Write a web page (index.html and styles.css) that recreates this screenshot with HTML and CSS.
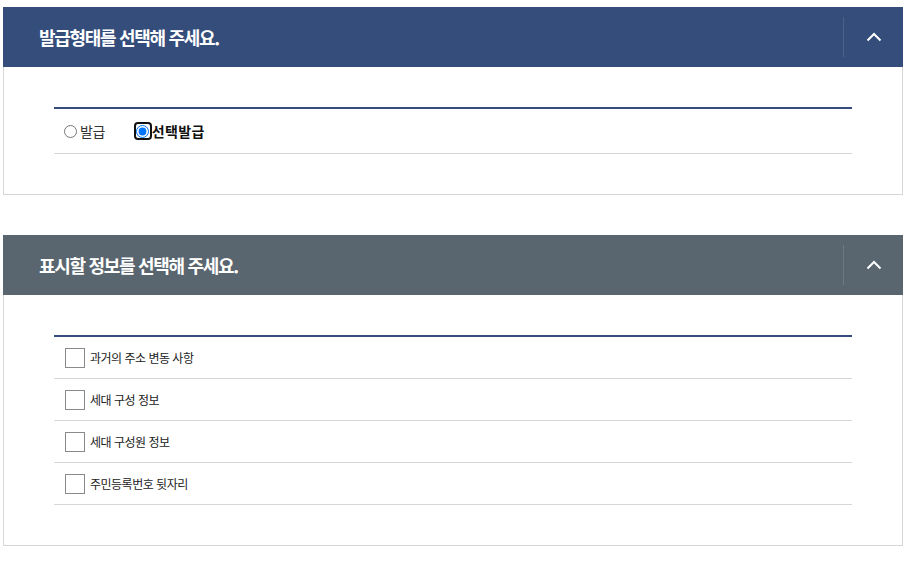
FILE: index.html
```html
<!DOCTYPE html>
<html lang="ko">
<head>
<meta charset="utf-8">
<title>발급형태 선택</title>
<link rel="stylesheet" href="styles.css">
</head>
<body>
<div class="page">
  <section class="panel">
    <div class="panel-head navy">
      <h2 class="panel-title">발급형태를 선택해 주세요.</h2>
      <button class="toggle" type="button" aria-label="접기">
        <svg width="16" height="10" viewBox="0 0 16 10"><path d="M1.5 8.5 L8 2 L14.5 8.5" fill="none" stroke="#fff" stroke-width="2"/></svg>
      </button>
    </div>
    <div class="panel-body">
      <div class="list">
        <div class="row radio-row">
          <label class="radio-opt"><input type="radio" name="type" class="radio">발급</label>
          <label class="radio-opt sel"><span class="focus-ring"><input type="radio" name="type" class="radio" checked></span>선택발급</label>
        </div>
      </div>
    </div>
  </section>

  <section class="panel">
    <div class="panel-head slate">
      <h2 class="panel-title">표시할 정보를 선택해 주세요.</h2>
      <button class="toggle" type="button" aria-label="접기">
        <svg width="16" height="10" viewBox="0 0 16 10"><path d="M1.5 8.5 L8 2 L14.5 8.5" fill="none" stroke="#fff" stroke-width="2"/></svg>
      </button>
    </div>
    <div class="panel-body">
      <div class="list">
        <label class="row check-row"><input type="checkbox" class="box"><span>과거의 주소 변동 사항</span></label>
        <label class="row check-row"><input type="checkbox" class="box"><span>세대 구성 정보</span></label>
        <label class="row check-row"><input type="checkbox" class="box"><span>세대 구성원 정보</span></label>
        <label class="row check-row"><input type="checkbox" class="box"><span>주민등록번호 뒷자리</span></label>
      </div>
    </div>
  </section>
</div>
</body>
</html>
```

FILE: styles.css
```css
* { box-sizing: border-box; }
html, body { margin: 0; padding: 0; background: #fff; }
body {
  font-family: "Noto Sans CJK KR", "Noto Sans", sans-serif;
  color: #222;
}
.page {
  padding: 7px 7px 0 3px;
}
.panel {
  width: 900px;
  margin-bottom: 40px;
}
.panel-head {
  height: 60px;
  display: flex;
  align-items: center;
  justify-content: space-between;
  padding-left: 36px;
}
.navy { background: #344d7a; }
.slate { background: #5a666f; }
.panel-title {
  margin: 0;
  color: #fff;
  font-size: 18px;
  font-weight: 700;
  letter-spacing: -1.3px;
}
.toggle {
  width: 60px;
  height: 40px;
  border: 0;
  border-left: 1px solid rgba(255,255,255,0.12);
  background: transparent;
  padding: 0;
  display: flex;
  align-items: center;
  justify-content: center;
  cursor: pointer;
}
.panel-body {
  border: 1px solid #d6d6d6;
  border-top: 0;
  padding: 40px 50px 40px 50px;
}
.list {
  border-top: 2px solid #344d7a;
}
.row {
  display: flex;
  align-items: center;
  border-bottom: 1px solid #d6d6d6;
}
.radio-row {
  height: 45px;
  padding-left: 5px;
  font-size: 14px;
  letter-spacing: -0.5px;
  color: #333;
}
.radio-opt {
  display: flex;
  align-items: center;
  margin-right: 29px;
}
.radio {
  margin: 0 3px 0 5px;
  width: 13px;
  height: 13px;
}
.sel {
  font-weight: 700;
  color: #111;
  letter-spacing: 0.4px;
}
.focus-ring {
  display: inline-flex;
  align-items: center;
  justify-content: center;
  width: 18px;
  height: 18px;
  border: 2px solid #111;
  border-radius: 4px;
}
.focus-ring .radio {
  margin: 0;
}
.check-row {
  height: 42px;
  padding-left: 11px;
  font-size: 12px;
  letter-spacing: -0.5px;
  color: #222;
}
.box {
  appearance: none;
  -webkit-appearance: none;
  width: 20px;
  height: 20px;
  margin: 0 5px 0 0;
  border: 1px solid #8a8a8a;
  background: #fff;
  flex: none;
}
```
